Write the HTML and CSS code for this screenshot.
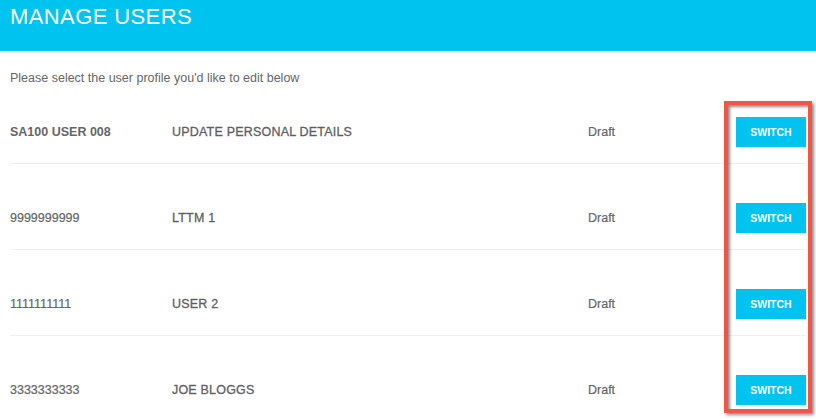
FILE: index.html
```html
<!DOCTYPE html>
<html lang="en">

<head>
    <meta charset="utf-8">
    <title>Manage Users</title>
    <link rel="stylesheet" href="styles.css">
</head>

<body>

    <div class="mu-header">
        <h1>MANAGE USERS</h1>
    </div>

    <div class="mu-content">
        <p class="mu-intro">Please select the user profile you'd like to edit below</p>

        <div class="mu-list">
            <div class="mu-row">
                <span class="mu-id mu-strong">SA100 USER 008</span>
                <span class="mu-name">UPDATE PERSONAL DETAILS</span>
                <span class="mu-status">Draft</span>
                <a class="mu-switch" href="#0">SWITCH</a>
            </div>
            <div class="mu-row">
                <span class="mu-id">9999999999</span>
                <span class="mu-name">LTTM 1</span>
                <span class="mu-status">Draft</span>
                <a class="mu-switch" href="#0">SWITCH</a>
            </div>
            <div class="mu-row">
                <span class="mu-id">1111111111</span>
                <span class="mu-name">USER 2</span>
                <span class="mu-status">Draft</span>
                <a class="mu-switch" href="#0">SWITCH</a>
            </div>
            <div class="mu-row">
                <span class="mu-id">3333333333</span>
                <span class="mu-name">JOE BLOGGS</span>
                <span class="mu-status">Draft</span>
                <a class="mu-switch" href="#0">SWITCH</a>
            </div>
        </div>
    </div>

    <!-- Highlight drawn over the switch buttons -->
    <div class="mu-highlight"></div>

</body>

</html>
```

FILE: styles.css
```css
body {
    margin: 0;
    font-family: "Liberation Sans", Arial, sans-serif;
    color: #666666;
    background-color: #ffffff;
}

/* Header bar */
.mu-header {
    height: 52px;
    padding: 6px 10px 0 10px;
    box-sizing: border-box;
    background-color: #00c3ef;
    border-bottom: 1px solid #eeeeee;
}

.mu-header h1 {
    margin: 0;
    font-size: 22px;
    line-height: 22px;
    font-weight: normal;
    letter-spacing: .4px;
    color: #ffffff;
}

/* Content */
.mu-content {
    padding: 0 10px;
}

.mu-intro {
    margin: 19px 0 0 0;
    font-size: 12.5px;
    line-height: 15px;
}

/* Rows */
.mu-row {
    display: grid;
    grid-template-columns: 162px 1fr 148px 70px;
    align-items: center;
    padding: 39px 0 16px 0;
    border-bottom: 1px solid #f0f0f0;
    font-size: 12.5px;
    line-height: 15px;
}

.mu-row:first-child {
    padding-top: 31px;
}

.mu-row:last-child {
    border-bottom: none;
}

.mu-id,
.mu-status {
    -webkit-text-stroke: .2px #666666;
}

.mu-strong {
    font-weight: bold;
    -webkit-text-stroke: 0;
}

.mu-name {
    color: #5f5f5f;
    letter-spacing: .2px;
    -webkit-text-stroke: .3px #5f5f5f;
}

.mu-switch,
.mu-switch:link,
.mu-switch:visited {
    display: flex;
    align-items: center;
    justify-content: center;
    height: 30px;
    background-color: #00c3ef;
    color: #ffffff;
    font-size: 10.5px;
    font-weight: bold;
    text-decoration: none;
}

/* Annotation box */
.mu-highlight {
    position: absolute;
    left: 724px;
    top: 101px;
    width: 88px;
    height: 312px;
    box-sizing: border-box;
    border: 4px solid #ef5646;
    box-shadow: 2px 2px 3px rgba(0, 0, 0, .45), inset 2px 2px 3px rgba(0, 0, 0, .45);
}
```
